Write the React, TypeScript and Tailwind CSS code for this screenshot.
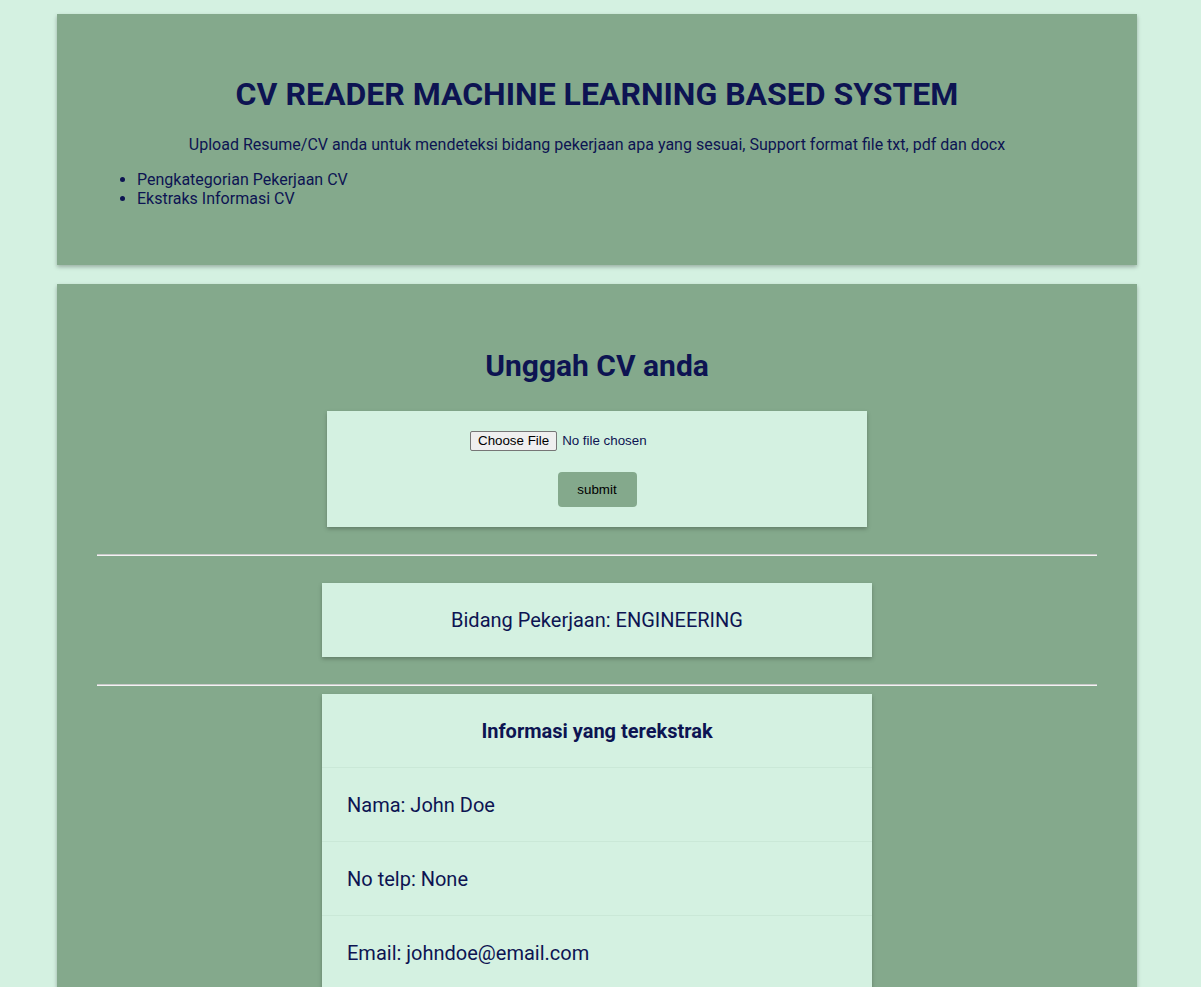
export default function App() {
  const rows = ['Nama: John Doe', 'No telp: None', 'Email: johndoe@email.com'];

  return (
    <div className="min-h-screen bg-[#d4f1e1] pt-[14px] pb-[20px] font-['Roboto',sans-serif] text-[#0d1452]">
      {/* header */}
      <div className="ml-[57px] w-[1080px] bg-[#84a98c] px-[40px] pt-[62px] pb-[57px] shadow-[0_2px_4px_rgba(0,0,0,0.28)]">
        <h1 className="text-center text-[32px] font-bold leading-[37px]">
          CV READER MACHINE LEARNING BASED SYSTEM
        </h1>
        <p className="mt-[22px] text-center text-base leading-[19px]">
          Upload Resume/CV anda untuk mendeteksi bidang pekerjaan apa yang sesuai, Support format file txt, pdf dan docx
        </p>
        <ul className="mt-[16px] list-disc pl-[40px] text-base leading-[19px]">
          <li>Pengkategorian Pekerjaan CV</li>
          <li>Ekstraks Informasi CV</li>
        </ul>
      </div>

      {/* upload + hasil */}
      <div className="mt-[19px] ml-[57px] w-[1080px] bg-[#84a98c] px-[40px] pt-[64px] pb-[40px] shadow-[0_2px_4px_rgba(0,0,0,0.28)]">
        <h2 className="text-center text-[30px] font-bold leading-[36px]">Unggah CV anda</h2>

        <form className="mx-auto mt-[27px] flex w-[540px] flex-col items-center bg-[#d4f1e1] pt-[20px] pb-[20px] shadow-[0_2px_4px_rgba(0,0,0,0.25)]">
          <input
            type="file"
            className="w-[254px] font-['Liberation_Sans',Arial,sans-serif] text-[13.33px] leading-[16px] text-[#0d1452] file:mr-[5px] file:rounded-[2px] file:border file:border-solid file:border-[#767676] file:bg-[#efefef] file:px-[7px] file:py-[1px] file:text-black"
          />
          <button
            type="button"
            className="mt-[21px] h-[35px] w-[79px] rounded-[4px] bg-[#84a98c] font-['Liberation_Sans',Arial,sans-serif] text-[13.33px] text-black"
          >
            submit
          </button>
        </form>

        <hr className="mt-[27px] border-0 border-t border-b border-t-[#c9c9c9] border-b-[#f3f3f3]" />

        <div className="mx-auto mt-[27px] w-[550px] bg-[#d4f1e1] py-[25px] text-center text-[20px] leading-[24px] shadow-[0_2px_4px_rgba(0,0,0,0.25)]">
          Bidang Pekerjaan: ENGINEERING
        </div>

        <hr className="mt-[27px] border-0 border-t border-b border-t-[#c9c9c9] border-b-[#f3f3f3]" />

        <div className="mx-auto mt-[8px] w-[550px] bg-[#d4f1e1] shadow-[0_2px_4px_rgba(0,0,0,0.25)]">
          <div className="flex h-[74px] items-center justify-center border-b border-[#cae8d7] text-[20px] font-bold">
            Informasi yang terekstrak
          </div>
          {rows.map((r) => (
            <div key={r} className="flex h-[74px] items-center border-b border-[#cae8d7] px-[25px] text-[20px]">
              {r}
            </div>
          ))}
        </div>
      </div>
    </div>
  );
}
